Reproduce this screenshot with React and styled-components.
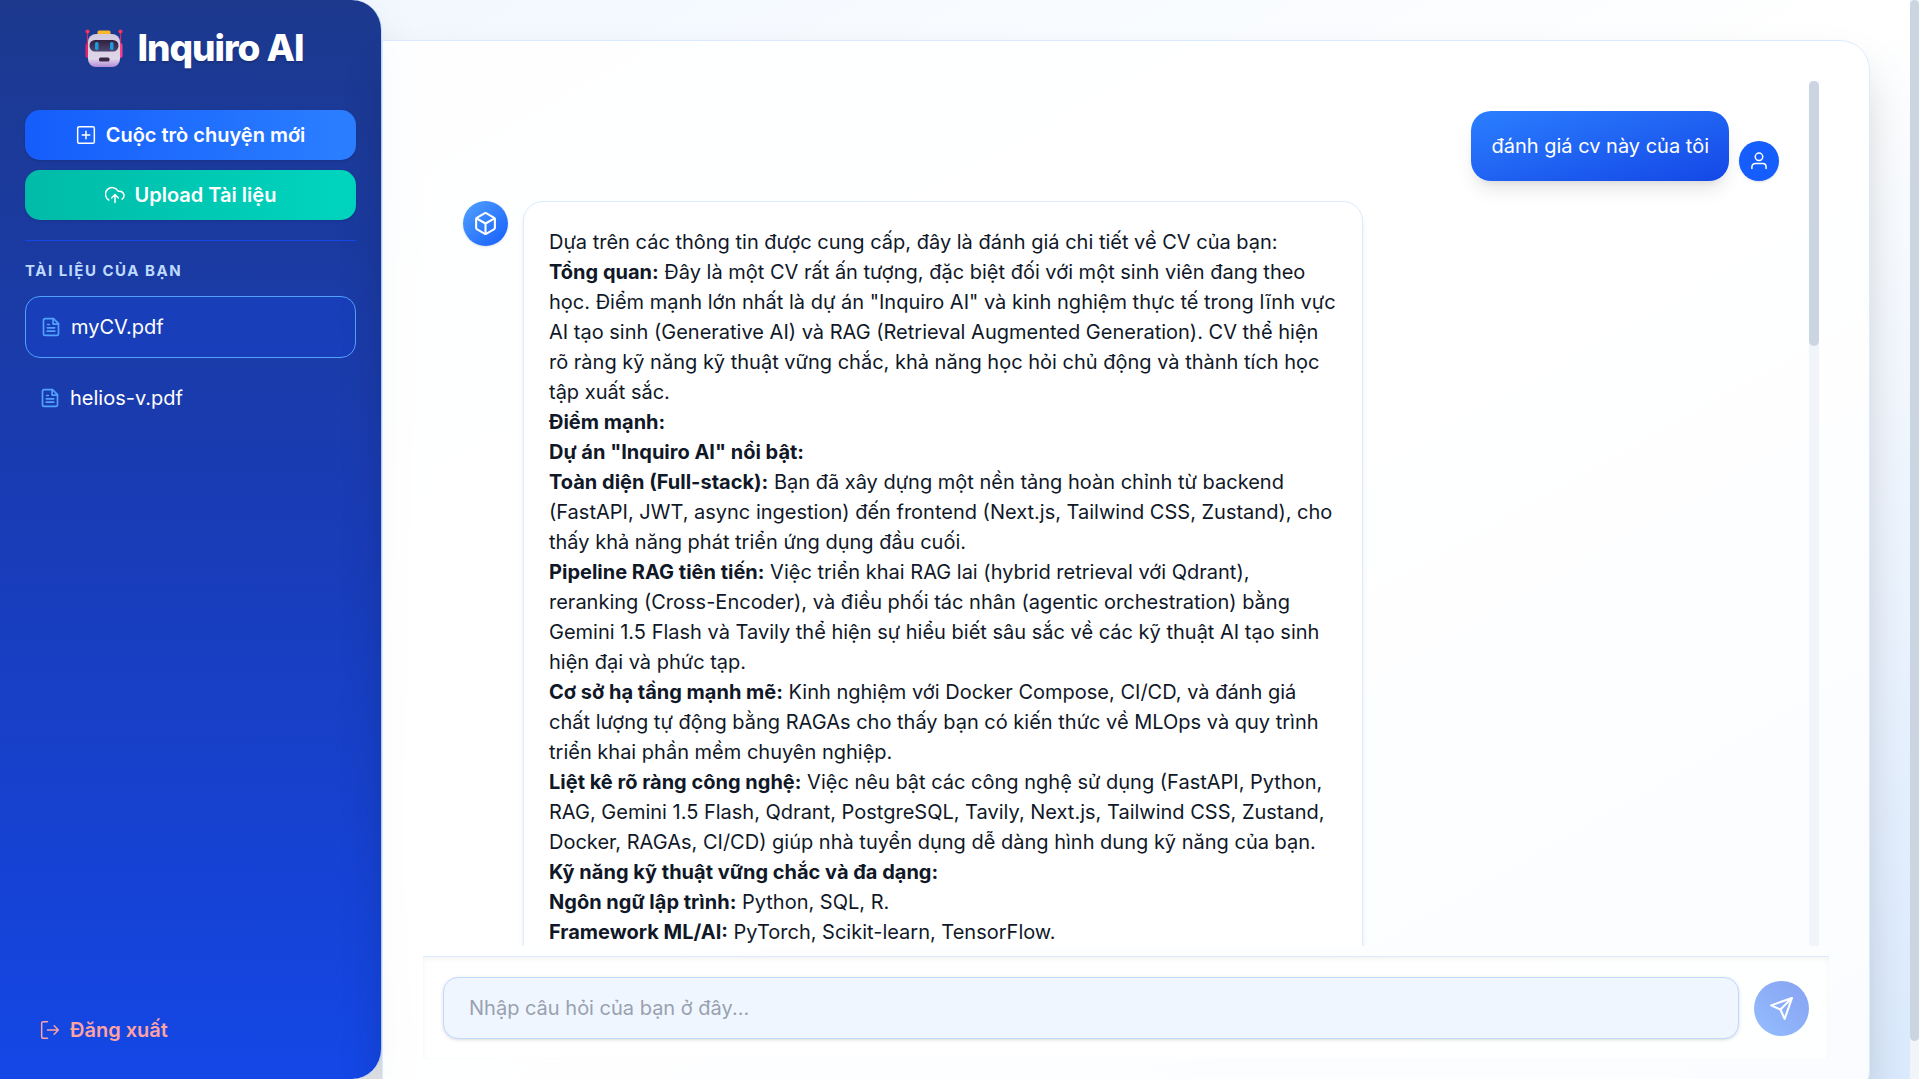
import React, { useState } from "react";
import styled, { createGlobalStyle, css } from "styled-components";

const GlobalStyle = createGlobalStyle`
  *, *::before, *::after { box-sizing: border-box; }
  body {
    margin: 0;
    color: #101828;
    font: 400 20px/30px Inter, "Noto Sans", sans-serif;
  }
  button, input { font: inherit; }
`;

const Page = styled.div`
  display: flex;
  align-items: flex-start;
  height: 100vh;
  overflow: hidden;
  background: linear-gradient(to bottom right, #eff6ff, #ffffff, #dbeafe);
`;

const ScrollTrack = styled.div`
  flex: none;
  align-self: stretch;
  width: ${(p) => (p.$edge ? "9px" : "10px")};
  background: #f1f5f9;
`;

const ScrollThumb = styled.div`
  height: ${(p) => p.$share};
  border-radius: 5px;
  background: #cbd5e1;
`;

const Sidebar = styled.aside`
  flex: 0 0 382px;
  height: 100vh;
  display: flex;
  flex-direction: column;
  padding: 25px;
  border-right: 1px solid #bedbff;
  border-radius: 0 30px 30px 0;
  background: linear-gradient(to bottom, #1c398e, #193cb8, #1447e6);
  box-shadow: 0 25px 50px -12px rgba(0, 0, 0, 0.25);
`;

const Brand = styled.h1`
  display: flex;
  align-items: center;
  justify-content: center;
  gap: 6px;
  margin: 0 0 40px;
  color: #ffffff;
  font-size: 37px;
  font-weight: 800;
  line-height: 45px;
  letter-spacing: -1px;
  text-shadow: 0 2px 2px rgba(0, 0, 0, 0.15);
`;

const BrandMark = styled.span`
  display: flex;
  padding: 0 8px;
`;

const Actions = styled.div`
  display: flex;
  flex-direction: column;
  gap: 10px;
  padding-bottom: 20px;
  border-bottom: 1px solid #1447e6;
`;

const ActionButton = styled.button`
  display: flex;
  align-items: center;
  justify-content: center;
  gap: 10px;
  height: 50px;
  border: 0;
  border-radius: 15px;
  color: #ffffff;
  font-weight: 600;
  background: ${(p) =>
    p.$tone === "teal"
      ? "linear-gradient(to right, #00bba7, #00d5be)"
      : "linear-gradient(to right, #155dfc, #2b7fff)"};
  box-shadow: 0 1px 3px rgba(0, 0, 0, 0.1), 0 1px 2px -1px rgba(0, 0, 0, 0.1);
`;

const SectionTitle = styled.h2`
  margin: 17px 0 13px;
  color: #bedbff;
  font-size: 15px;
  font-weight: 700;
  line-height: 25px;
  letter-spacing: 0.1em;
`;

const DocumentList = styled.ul`
  display: flex;
  flex-direction: column;
  gap: 10px;
  margin: 0;
  padding: 0;
  list-style: none;
`;

const DocumentButton = styled.button`
  display: flex;
  align-items: center;
  gap: 10px;
  width: 100%;
  height: 60px;
  padding: 0 15px;
  border: 0;
  border-radius: 15px;
  color: #ffffff;
  background: transparent;
  ${(p) =>
    p.$active &&
    css`
      height: 62px;
      border: 1px solid #51a2ff;
      background: rgba(20, 71, 230, 0.3);
    `}
  svg { color: #51a2ff; }
`;

const LogoutButton = styled.button`
  display: flex;
  align-items: center;
  gap: 10px;
  height: 48px;
  margin-top: auto;
  padding: 0 15px;
  border: 0;
  color: #ffa2a2;
  font-weight: 600;
  background: transparent;
`;

const Main = styled.main`
  flex: 1;
  min-width: 0;
  padding: 40px 40px 0 0;
`;

const ChatCard = styled.section`
  position: relative;
  display: flex;
  flex-direction: column;
  height: calc(100vh - 19px);
  padding: 40px;
  border: 1px solid #dbeafe;
  border-radius: 0 30px 30px 0;
  background: rgba(255, 255, 255, 0.85);
  box-shadow: 0 25px 50px -12px rgba(0, 0, 0, 0.25);
`;

const MessagesPane = styled.div`
  flex: 1;
  min-height: 0;
  display: flex;
  margin: 0 10px 10px;
`;

const Messages = styled.div`
  flex: 1;
  min-width: 0;
  padding: 30px;
  overflow-y: auto;
  scrollbar-width: none;
`;

const MessageRow = styled.article`
  display: flex;
  align-items: ${(p) => (p.$own ? "flex-end" : "flex-start")};
  justify-content: ${(p) => (p.$own ? "flex-end" : "flex-start")};
  gap: ${(p) => (p.$own ? "10px" : "15px")};
  margin-bottom: 20px;
`;

const Avatar = styled.span`
  display: grid;
  place-items: center;
  flex: none;
  width: ${(p) => (p.$bot ? "45px" : "40px")};
  height: ${(p) => (p.$bot ? "45px" : "40px")};
  border-radius: 50%;
  color: #ffffff;
  background: ${(p) =>
    p.$bot ? "linear-gradient(to bottom right, #51a2ff, #155dfc)" : "#155dfc"};
  box-shadow: 0 1px 3px rgba(0, 0, 0, 0.1), 0 1px 2px -1px rgba(0, 0, 0, 0.1);
`;

const UserBubble = styled.p`
  margin: 0;
  padding: 20px;
  border-radius: 20px;
  color: #ffffff;
  background: linear-gradient(to bottom right, #2b7fff, #1447e6);
  box-shadow: 0 12px 19px -4px rgba(0, 0, 0, 0.1), 0 5px 8px -5px rgba(0, 0, 0, 0.1);
`;

const BotBubble = styled.div`
  max-width: 840px;
  min-height: 150vh;
  padding: 25px;
  border: 1px solid #dbeafe;
  border-radius: 20px;
  background: #ffffff;
  box-shadow: 0 5px 8px -1px rgba(0, 0, 0, 0.06), 0 3px 5px -2px rgba(0, 0, 0, 0.06);
  p { margin: 0; }
  strong { font-weight: 700; }
`;

const Composer = styled.form`
  display: flex;
  align-items: center;
  gap: 15px;
  padding: 20px;
  border-top: 1px solid #dbeafe;
  background: rgba(255, 255, 255, 0.8);
  box-shadow: inset 0 2px 5px rgba(0, 0, 0, 0.05);
`;

const QuestionInput = styled.input`
  flex: 1;
  min-width: 0;
  height: 62px;
  padding: 0 25px;
  border: 1px solid #bedbff;
  border-radius: 15px;
  outline: 0;
  color: #101828;
  background: #eff6ff;
  box-shadow: 0 1px 4px rgba(0, 0, 0, 0.1), 0 1px 3px -1px rgba(0, 0, 0, 0.1);
  &::placeholder { color: #99a1af; opacity: 1; }
`;

const SendButton = styled.button`
  display: grid;
  place-items: center;
  width: 55px;
  height: 55px;
  padding: 0;
  border: 0;
  border-radius: 50%;
  color: #ffffff;
  background: linear-gradient(to top right, #2b7fff, #1447e6);
  opacity: 0.5;
`;

const Icon = ({ size = 20, width = 2, children }) => (
  <svg width={size} height={size} viewBox="0 0 24 24" fill="none" stroke="currentColor"
    strokeWidth={width} strokeLinecap="round" strokeLinejoin="round" aria-hidden="true">
    {children}
  </svg>
);

const RobotLogo = () => (
  <svg width="38" height="38" viewBox="0 0 38 38" aria-hidden="true">
    <defs>
      <linearGradient id="face" x1="0" y1="0" x2="0" y2="1">
        <stop offset="0" stopColor="#d2c9df" />
        <stop offset="0.75" stopColor="#e0d6e8" />
        <stop offset="1" stopColor="#b18bd8" />
      </linearGradient>
      <linearGradient id="visor" x1="0" y1="0" x2="0" y2="1">
        <stop offset="0" stopColor="#32203f" />
        <stop offset="1" stopColor="#4c4670" />
      </linearGradient>
    </defs>
    <path d="M2.5 3v14M35.5 3v14" stroke="#d62a6e" strokeWidth="1.2" />
    <circle cx="2.5" cy="2.5" r="2" fill="#f8315f" />
    <circle cx="35.5" cy="2.5" r="2" fill="#f8315f" />
    <rect x="0.5" y="14" width="5" height="15" rx="2.5" fill="#e4246a" />
    <rect x="32.5" y="14" width="5" height="15" rx="2.5" fill="#f4418b" />
    <rect x="12.5" y="1.5" width="13" height="5" rx="1.5" fill="#fdb728" />
    <rect x="3" y="5" width="32" height="33" rx="8" fill="url(#face)" />
    <rect x="4.5" y="11" width="29" height="11.5" rx="5.5" fill="url(#visor)" />
    <rect x="10" y="13" width="3.5" height="8" rx="1.5" fill="#1b9be0" />
    <rect x="25" y="13" width="3.5" height="8" rx="1.5" fill="#1b9be0" />
    <rect x="14" y="28.5" width="10.5" height="4" rx="1.5" fill="#3b2647" />
  </svg>
);

const PlusSquareIcon = () => (
  <Icon width={1.8}>
    <rect x="2" y="2" width="20" height="20" rx="2" />
    <path d="M12 7.500v9M7.500 12h9" />
  </Icon>
);

const CloudUploadIcon = () => (
  <Icon width={1.8}>
    <path d="M12 21V12M8 15.500l4-4 4 4" />
    <path d="M4.500 18A8 8 0 1 1 15.700 7.500h1.800a5.200 5.200 0 0 1 3 9.500" />
  </Icon>
);

const DocumentIcon = () => (
  <Icon width={2}>
    <path d="M15 2H5a2 2 0 0 0-2 2v16a2 2 0 0 0 2 2h14a2 2 0 0 0 2-2V8z" />
    <path d="M14.500 2v6.500H21M8 9h2M7.500 13h9M7.500 17h9" />
  </Icon>
);

const LogoutIcon = () => (
  <Icon width={1.8}>
    <path d="M9 22H4a2 2 0 0 1-2-2V4a2 2 0 0 1 2-2h5M17 17l5-5-5-5M22 12H9" />
  </Icon>
);

const CubeIcon = () => (
  <Icon size={25}>
    <path d="M21 8a2 2 0 0 0-1-1.730l-7-4a2 2 0 0 0-2 0l-7 4A2 2 0 0 0 3 8v8a2 2 0 0 0 1 1.730l7 4a2 2 0 0 0 2 0l7-4A2 2 0 0 0 21 16z" />
    <path d="M3.300 7L12 12l8.700-5M12 22V12" />
  </Icon>
);

const UserIcon = () => (
  <Icon width={1.8}>
    <circle cx="12" cy="7" r="4.500" />
    <path d="M3.500 21v-2a4 4 0 0 1 4-4h9a4 4 0 0 1 4 4v2" />
  </Icon>
);

const SendIcon = () => (
  <Icon size={25}>
    <path d="M22 2L2 9l9 4 4 9zM22 2L11 13" />
  </Icon>
);

const documents = ["myCV.pdf", "helios-v.pdf"];

const answer = [
  ["", "Dựa trên các thông tin được cung cấp, đây là đánh giá chi tiết về CV của bạn:"],
  ["Tổng quan:", "Đây là một CV rất ấn tượng, đặc biệt đối với một sinh viên đang theo học. Điểm mạnh lớn nhất là dự án \"Inquiro AI\" và kinh nghiệm thực tế trong lĩnh vực AI tạo sinh (Generative AI) và RAG (Retrieval Augmented Generation). CV thể hiện rõ ràng kỹ năng kỹ thuật vững chắc, khả năng học hỏi chủ động và thành tích học tập xuất sắc."],
  ["Điểm mạnh:", ""],
  ["Dự án \"Inquiro AI\" nổi bật:", ""],
  ["Toàn diện (Full-stack):", "Bạn đã xây dựng một nền tảng hoàn chỉnh từ backend (FastAPI, JWT, async ingestion) đến frontend (Next.js, Tailwind CSS, Zustand), cho thấy khả năng phát triển ứng dụng đầu cuối."],
  ["Pipeline RAG tiên tiến:", "Việc triển khai RAG lai (hybrid retrieval với Qdrant), reranking (Cross-Encoder), và điều phối tác nhân (agentic orchestration) bằng Gemini 1.5 Flash và Tavily thể hiện sự hiểu biết sâu sắc về các kỹ thuật AI tạo sinh hiện đại và phức tạp."],
  ["Cơ sở hạ tầng mạnh mẽ:", "Kinh nghiệm với Docker Compose, CI/CD, và đánh giá chất lượng tự động bằng RAGAs cho thấy bạn có kiến thức về MLOps và quy trình triển khai phần mềm chuyên nghiệp."],
  ["Liệt kê rõ ràng công nghệ:", "Việc nêu bật các công nghệ sử dụng (FastAPI, Python, RAG, Gemini 1.5 Flash, Qdrant, PostgreSQL, Tavily, Next.js, Tailwind CSS, Zustand, Docker, RAGAs, CI/CD) giúp nhà tuyển dụng dễ dàng hình dung kỹ năng của bạn."],
  ["Kỹ năng kỹ thuật vững chắc và đa dạng:", ""],
  ["Ngôn ngữ lập trình:", "Python, SQL, R."],
  ["Framework ML/AI:", "PyTorch, Scikit-learn, TensorFlow."],
];

export default function App() {
  const [selected, setSelected] = useState(documents[0]);
  const [question, setQuestion] = useState("");

  return (
    <>
      <GlobalStyle />
      <Page>
        <Sidebar>
          <Brand>
            <BrandMark>
              <RobotLogo />
            </BrandMark>
            Inquiro AI
          </Brand>
          <Actions>
            <ActionButton type="button">
              <PlusSquareIcon />
              Cuộc trò chuyện mới
            </ActionButton>
            <ActionButton type="button" $tone="teal">
              <CloudUploadIcon />
              Upload Tài liệu
            </ActionButton>
          </Actions>
          <SectionTitle>TÀI LIỆU CỦA BẠN</SectionTitle>
          <DocumentList>
            {documents.map((name) => (
              <li key={name}>
                <DocumentButton type="button" $active={name === selected} onClick={() => setSelected(name)}>
                  <DocumentIcon />
                  {name}
                </DocumentButton>
              </li>
            ))}
          </DocumentList>
          <LogoutButton type="button">
            <LogoutIcon />
            Đăng xuất
          </LogoutButton>
        </Sidebar>
        <Main>
          <ChatCard>
            <MessagesPane>
              <Messages>
                <MessageRow $own>
                  <UserBubble>đánh giá cv này của tôi</UserBubble>
                  <Avatar>
                    <UserIcon />
                  </Avatar>
                </MessageRow>
                <MessageRow>
                  <Avatar $bot>
                    <CubeIcon />
                  </Avatar>
                  <BotBubble>
                    {answer.map(([label, text]) => (
                      <p key={label}>
                        {label && <strong>{label}</strong>} {text}
                      </p>
                    ))}
                  </BotBubble>
                </MessageRow>
              </Messages>
              <ScrollTrack aria-hidden="true">
                <ScrollThumb $share="30.6%" />
              </ScrollTrack>
            </MessagesPane>
            <Composer onSubmit={(event) => event.preventDefault()}>
              <QuestionInput
                type="text"
                aria-label="Câu hỏi"
                placeholder="Nhập câu hỏi của bạn ở đây..."
                value={question}
                onChange={(event) => setQuestion(event.target.value)}
              />
              <SendButton type="submit" aria-label="Gửi" disabled={!question}>
                <SendIcon />
              </SendButton>
            </Composer>
          </ChatCard>
        </Main>
        <ScrollTrack $edge aria-hidden="true">
          <ScrollThumb $share="96.5%" />
        </ScrollTrack>
      </Page>
    </>
  );
}
